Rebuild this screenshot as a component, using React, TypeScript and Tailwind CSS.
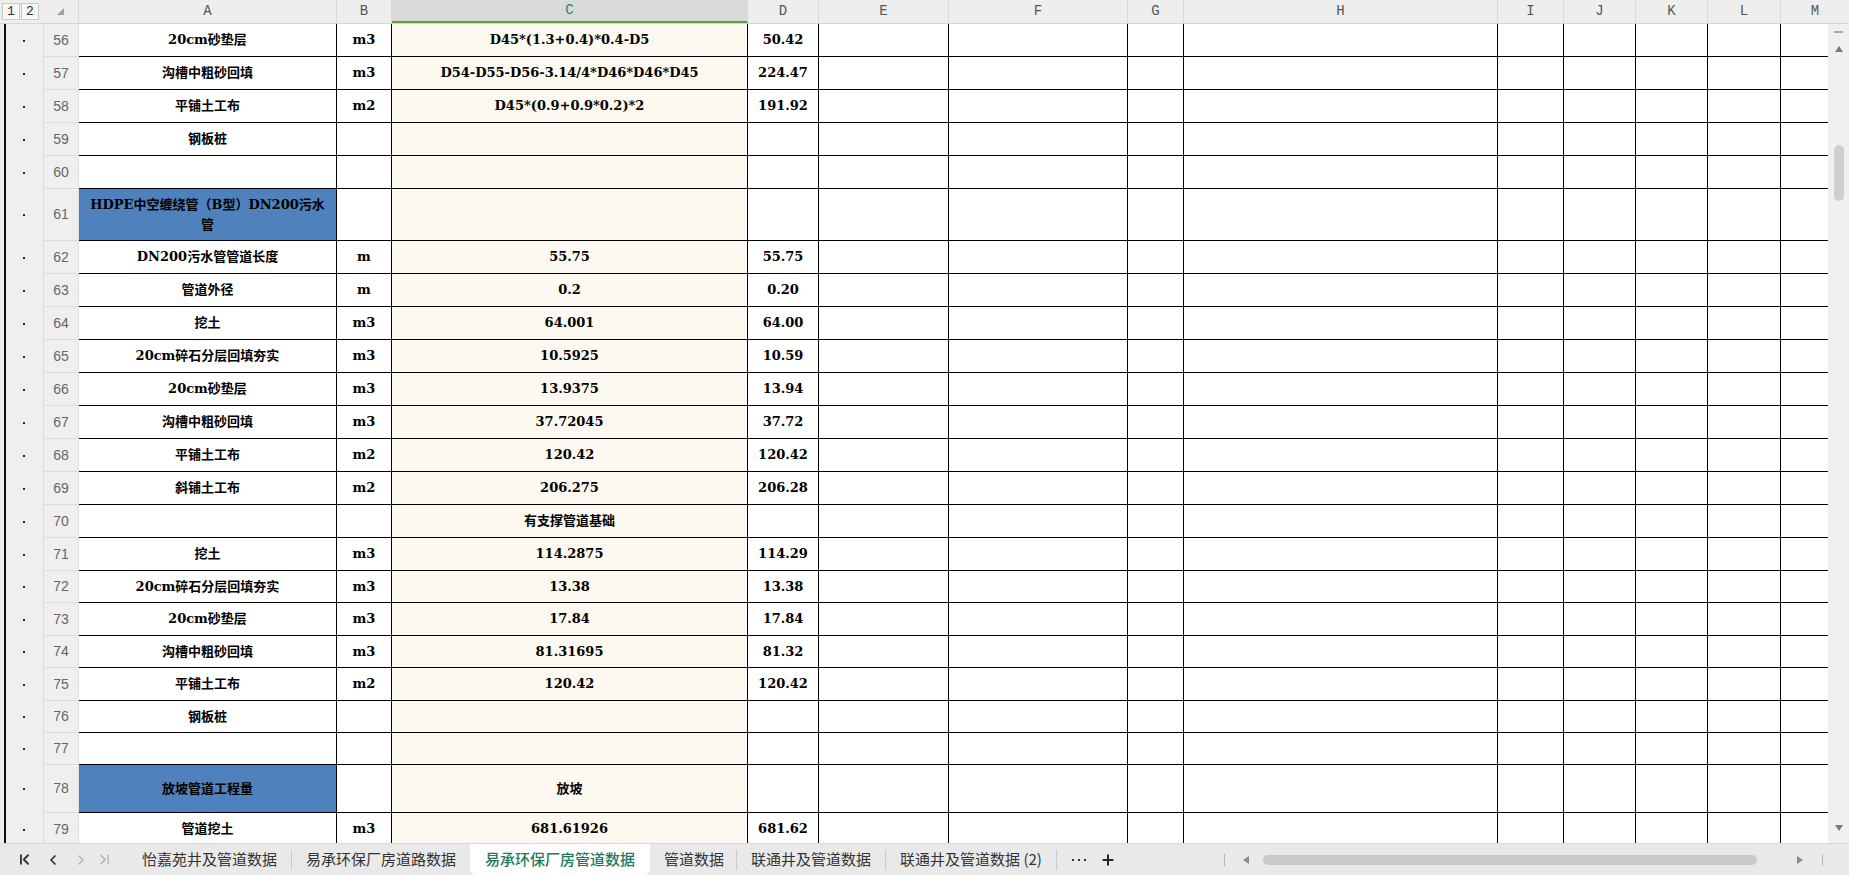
import React from 'react';
import { ChevronFirst, ChevronLeft, ChevronRight, ChevronLast, Plus } from 'lucide-react';

type Row = { n: number; h: number; a?: React.ReactNode; b?: string; c?: string; d?: string; blue?: boolean };

const rows: Row[] = [
  { n: 56, h: 33, a: '20cm砂垫层', b: 'm3', c: 'D45*(1.3+0.4)*0.4-D5', d: '50.42' },
  { n: 57, h: 33, a: '沟槽中粗砂回填', b: 'm3', c: 'D54-D55-D56-3.14/4*D46*D46*D45', d: '224.47' },
  { n: 58, h: 33, a: '平铺土工布', b: 'm2', c: 'D45*(0.9+0.9*0.2)*2', d: '191.92' },
  { n: 59, h: 33, a: '钢板桩' },
  { n: 60, h: 33 },
  {
    n: 61,
    h: 52,
    blue: true,
    a: (
      <>
        HDPE中空缠绕管（B型）DN200污水
        <br />管
      </>
    ),
  },
  { n: 62, h: 33, a: 'DN200污水管管道长度', b: 'm', c: '55.75', d: '55.75' },
  { n: 63, h: 33, a: '管道外径', b: 'm', c: '0.2', d: '0.20' },
  { n: 64, h: 33, a: '挖土', b: 'm3', c: '64.001', d: '64.00' },
  { n: 65, h: 33, a: '20cm碎石分层回填夯实', b: 'm3', c: '10.5925', d: '10.59' },
  { n: 66, h: 33, a: '20cm砂垫层', b: 'm3', c: '13.9375', d: '13.94' },
  { n: 67, h: 33, a: '沟槽中粗砂回填', b: 'm3', c: '37.72045', d: '37.72' },
  { n: 68, h: 33, a: '平铺土工布', b: 'm2', c: '120.42', d: '120.42' },
  { n: 69, h: 33, a: '斜铺土工布', b: 'm2', c: '206.275', d: '206.28' },
  { n: 70, h: 33, c: '有支撑管道基础' },
  { n: 71, h: 33, a: '挖土', b: 'm3', c: '114.2875', d: '114.29' },
  { n: 72, h: 32, a: '20cm碎石分层回填夯实', b: 'm3', c: '13.38', d: '13.38' },
  { n: 73, h: 33, a: '20cm砂垫层', b: 'm3', c: '17.84', d: '17.84' },
  { n: 74, h: 32, a: '沟槽中粗砂回填', b: 'm3', c: '81.31695', d: '81.32' },
  { n: 75, h: 33, a: '平铺土工布', b: 'm2', c: '120.42', d: '120.42' },
  { n: 76, h: 32, a: '钢板桩' },
  { n: 77, h: 32 },
  { n: 78, h: 48, blue: true, a: '放坡管道工程量', c: '放坡' },
  { n: 79, h: 33, a: '管道挖土', b: 'm3', c: '681.61926', d: '681.62' },
];

const heights: Record<number, string> = {
  32: 'h-[32px]',
  33: 'h-[33px]',
  48: 'h-[48px]',
  52: 'h-[52px]',
};

const bodyCols =
  'grid grid-cols-[43px_36px_258px_55px_356px_71px_130px_179px_56px_314px_66px_72px_72px_73px_47px]';
const headCols =
  'grid grid-cols-[43px_36px_258px_55px_356px_71px_130px_179px_56px_314px_66px_72px_72px_73px_68px]';

const cellFont = "font-['DejaVu_Serif','Noto_Sans_CJK_SC',serif] text-[13px] font-bold text-black";
const letters = ['A', 'B', 'C', 'D', 'E', 'F', 'G', 'H', 'I', 'J', 'K', 'L', 'M'];

const Cell = ({ children, className = '' }: { children?: React.ReactNode; className?: string }) => (
  <div className={`flex items-center justify-center border-b border-black text-center leading-[20px] ${cellFont} ${className}`}>
    {children}
  </div>
);

const Tri = ({ dir, className = '' }: { dir: 'up' | 'down' | 'left' | 'right'; className?: string }) => {
  const pts = {
    up: '0,6 4,0 8,6',
    down: '0,0 8,0 4,6',
    left: '6,0 6,8 0,4',
    right: '0,0 0,8 6,4',
  }[dir];
  return (
    <svg width="8" height="8" viewBox="0 0 8 8" className={`shrink-0 ${className}`}>
      <polygon points={pts} fill="currentColor" />
    </svg>
  );
};

const Sep = () => <div className="h-[20px] w-px shrink-0 bg-[#c9c9c9]" />;

const Tab = ({ children, className = 'px-[14px]' }: { children: React.ReactNode; className?: string }) => (
  <div className={`shrink-0 whitespace-nowrap ${className}`}>{children}</div>
);

const App: React.FC = () => {
  return (
    <div className="flex h-[875px] w-[1849px] flex-col overflow-hidden bg-white">
      {/* column headers */}
      <div className={`${headCols} h-[24px] shrink-0 border-b border-[#d6d6d6] bg-[#eeeeee] font-['Liberation_Mono',monospace] text-[14px] text-[#555]`}>
        <div className="flex items-start gap-px pl-[2px] pt-[3px]">
          <div className="flex h-[17px] w-[18px] items-center justify-center border border-[#c8c8c8] bg-[#f7f7f7] text-[13px] text-[#333]">1</div>
          <div className="flex h-[17px] w-[18px] items-center justify-center border border-[#c8c8c8] bg-[#f7f7f7] text-[13px] text-[#333]">2</div>
        </div>
        <div className="flex items-center justify-end border-r border-[#d9d9d9] pr-[14px]">
          <svg width="7" height="7" viewBox="0 0 7 7">
            <polygon points="7,0 7,7 0,7" fill="#a0a0a0" />
          </svg>
        </div>
        {letters.map((l) => (
          <div
            key={l}
            className={`flex items-center justify-center border-r border-[#d9d9d9] ${
              l === 'C' ? 'border-b-2 border-b-[#57a13a] bg-[#dadada] text-[#2a7d6c]' : ''
            } ${l === 'M' ? 'border-r-0' : ''}`}
          >
            {l}
          </div>
        ))}
      </div>

      {/* body */}
      <div className="flex h-[819px] shrink-0">
        <div className="flex-1 overflow-hidden">
          {rows.map((r) => (
            <div key={r.n} className={`${bodyCols} ${heights[r.h]}`}>
              <div className="flex items-center bg-[#efefef]">
                <div className="ml-[4px] h-full w-[2px] bg-[#111]" />
                <div className="ml-[17px] h-[2px] w-[2px] bg-[#222]" />
              </div>
              <div className="flex items-center justify-center border-b border-l border-r border-[#dcdcdc] bg-[#efefef] font-['Liberation_Sans',sans-serif] text-[14px] text-[#666]">
                {r.n}
              </div>
              <Cell className={`border-r px-2 ${r.blue ? 'bg-[#4f81bd]' : ''}`}>{r.a}</Cell>
              <Cell className="border-r">{r.b}</Cell>
              <Cell className="border-r bg-[#fdf9f0]">{r.c}</Cell>
              <Cell className="border-r">{r.d}</Cell>
              <Cell className="border-r" />
              <Cell className="border-r" />
              <Cell className="border-r" />
              <Cell className="border-r" />
              <Cell className="border-r" />
              <Cell className="border-r" />
              <Cell className="border-r" />
              <Cell className="border-r" />
              <Cell />
            </div>
          ))}
        </div>
        {/* vertical scrollbar */}
        <div className="flex w-[21px] shrink-0 flex-col items-center bg-[#f0f0f0] text-[#7a7a7a]">
          <div className="mt-[7px] h-[2px] w-[9px] bg-[#a8a8a8]" />
          <Tri dir="up" className="mt-[13px]" />
          <div className="mt-[91px] h-[56px] w-[10px] rounded-full bg-[#cfcfcf]" />
          <div className="flex-1" />
          <Tri dir="down" className="mb-[10px]" />
        </div>
      </div>

      {/* sheet tabs */}
      <div className="flex h-[32px] shrink-0 items-center whitespace-nowrap border-t border-[#d9d9d9] bg-[#e9e9e9] font-['Noto_Sans_CJK_SC',sans-serif] text-[15px] text-[#333]">
        <div className="flex w-[128px] shrink-0 items-center">
          <ChevronFirst size={17} strokeWidth={2.6} className="ml-[16px] text-[#333]" />
          <ChevronLeft size={16} strokeWidth={2.6} className="ml-[12px] text-[#333]" />
          <ChevronRight size={16} strokeWidth={2} className="ml-[12px] text-[#b3b3b3]" />
          <ChevronLast size={17} strokeWidth={2} className="ml-[7px] text-[#b3b3b3]" />
        </div>
        <Tab>怡嘉苑井及管道数据</Tab>
        <Sep />
        <Tab>易承环保厂房道路数据</Tab>
        <Tab className="flex h-full items-center rounded-b-[6px] bg-white px-[15px] font-medium text-[#1e7a5c]">
          易承环保厂房管道数据
        </Tab>
        <Tab className="pl-[14px] pr-[12px]">管道数据</Tab>
        <Sep />
        <Tab>联通井及管道数据</Tab>
        <Sep />
        <Tab>联通井及管道数据 (2)</Tab>
        <Sep />
        <div className="ml-[15px] flex shrink-0 items-center gap-[4px]">
          <div className="h-[2px] w-[2px] bg-[#333]" />
          <div className="h-[2px] w-[2px] bg-[#333]" />
          <div className="h-[2px] w-[2px] bg-[#333]" />
        </div>
        <Plus size={16} strokeWidth={3} className="ml-[14px] shrink-0 text-[#222]" />
        <div className="ml-[108px] h-[12px] w-px shrink-0 bg-[#b5b5b5]" />
        <Tri dir="left" className="ml-[18px] text-[#8a8a8a]" />
        <div className="ml-[12px] h-[10px] w-[494px] shrink-0 rounded-full bg-[#c9c9c9]" />
        <Tri dir="right" className="ml-[40px] text-[#8a8a8a]" />
        <div className="ml-[17px] h-[12px] w-px shrink-0 bg-[#b5b5b5]" />
      </div>
    </div>
  );
};

export default App;
